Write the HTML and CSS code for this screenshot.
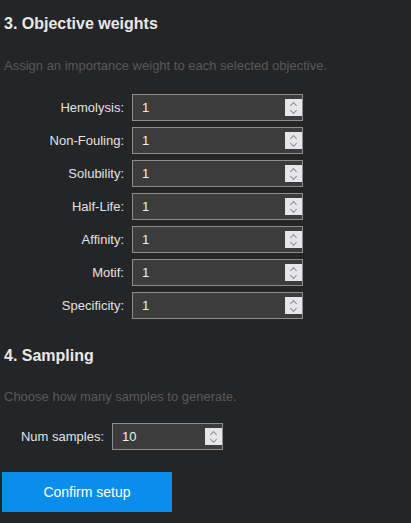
FILE: index.html
```html
<!DOCTYPE html>
<html>

<head>
    <meta name="viewport" content="width=device-width, minimum-scale=1">
    <title>Setup</title>
    <link rel="stylesheet" href="styles.css">
</head>

<body>
    <!-- objective weights -->
    <section class="step step-weights">
        <h2>3. Objective weights</h2>
        <p class="hint">Assign an importance weight to each selected objective.</p>
        <div class="fields">
            <label class="row">
                <span class="label">Hemolysis:</span>
                <span class="field"><input type="text" value="1"><span class="spin"></span></span>
            </label>
            <label class="row">
                <span class="label">Non-Fouling:</span>
                <span class="field"><input type="text" value="1"><span class="spin"></span></span>
            </label>
            <label class="row">
                <span class="label">Solubility:</span>
                <span class="field"><input type="text" value="1"><span class="spin"></span></span>
            </label>
            <label class="row">
                <span class="label">Half-Life:</span>
                <span class="field"><input type="text" value="1"><span class="spin"></span></span>
            </label>
            <label class="row">
                <span class="label">Affinity:</span>
                <span class="field"><input type="text" value="1"><span class="spin"></span></span>
            </label>
            <label class="row">
                <span class="label">Motif:</span>
                <span class="field"><input type="text" value="1"><span class="spin"></span></span>
            </label>
            <label class="row">
                <span class="label">Specificity:</span>
                <span class="field"><input type="text" value="1"><span class="spin"></span></span>
            </label>
        </div>
    </section>

    <!-- sampling -->
    <section class="step step-sampling">
        <h2>4. Sampling</h2>
        <p class="hint">Choose how many samples to generate.</p>
        <div class="fields">
            <label class="row">
                <span class="label">Num samples:</span>
                <span class="field"><input type="text" value="10"><span class="spin"></span></span>
            </label>
        </div>
    </section>

    <button class="confirm">Confirm setup</button>
</body>

</html>
```

FILE: styles.css
```css
:root {
    --background: #242527;
    --foreground: #e6e6e6;
    --muted-foreground: #58595b;
    --field: #3c3c3c;
    --field-border: #8d8d8d;
    --primary: #0b8ded;
}

* {
    box-sizing: border-box;
    padding: 0;
    margin: 0;
}

body {
    background: var(--background);
    color: var(--foreground);
    font-family: "Liberation Sans", Arial, sans-serif;
    padding: 14px 0 0 4px;
}

h2 {
    font-size: 16px;
    line-height: 20px;
    font-weight: bold;
    color: #e8e8e8;
}

.hint {
    font-size: 13px;
    line-height: 16px;
    color: var(--muted-foreground);
    margin-top: 24px;
}

.fields {
    display: flex;
    flex-direction: column;
    gap: 6px;
    margin-top: 20px;
}

.row {
    display: flex;
    align-items: center;
    gap: 8px;
    font-size: 13px;
}

.row .label {
    text-align: right;
    color: #e2e2e2;
}

.step-weights .label {
    width: 120px;
}

.step-weights .field {
    width: 171px;
}

.step-sampling {
    margin-top: 27px;
}

.step-sampling .hint {
    margin-top: 23px;
}

.step-sampling .fields {
    margin-top: 18px;
}

.step-sampling .label {
    width: 100px;
}

.step-sampling .field {
    width: 111px;
}

.field {
    display: flex;
    align-items: center;
    height: 27px;
    background: var(--field);
    border: 1px solid var(--field-border);
}

.field input {
    flex: 1;
    min-width: 0;
    background: none;
    border: none;
    outline: none;
    color: #f0f0f0;
    font: 13px "Liberation Sans", Arial, sans-serif;
    padding-left: 9px;
}

.spin {
    width: 17px;
    height: 17px;
    background: #e6e6ea;
    position: relative;
}

/* the two chevrons of the stepper */
.spin::before,
.spin::after {
    content: "";
    position: absolute;
    left: 6px;
    width: 4px;
    height: 4px;
    border-left: 1px solid #8e8e93;
    border-top: 1px solid #8e8e93;
}

.spin::before {
    top: 4px;
    transform: rotate(45deg);
}

.spin::after {
    top: 9px;
    transform: rotate(225deg);
}

.confirm {
    display: block;
    width: 170px;
    height: 40px;
    margin: 22px 0 0 -2px;
    background: var(--primary);
    color: #fff;
    border: none;
    font: 14px "Liberation Sans", Arial, sans-serif;
}
```
